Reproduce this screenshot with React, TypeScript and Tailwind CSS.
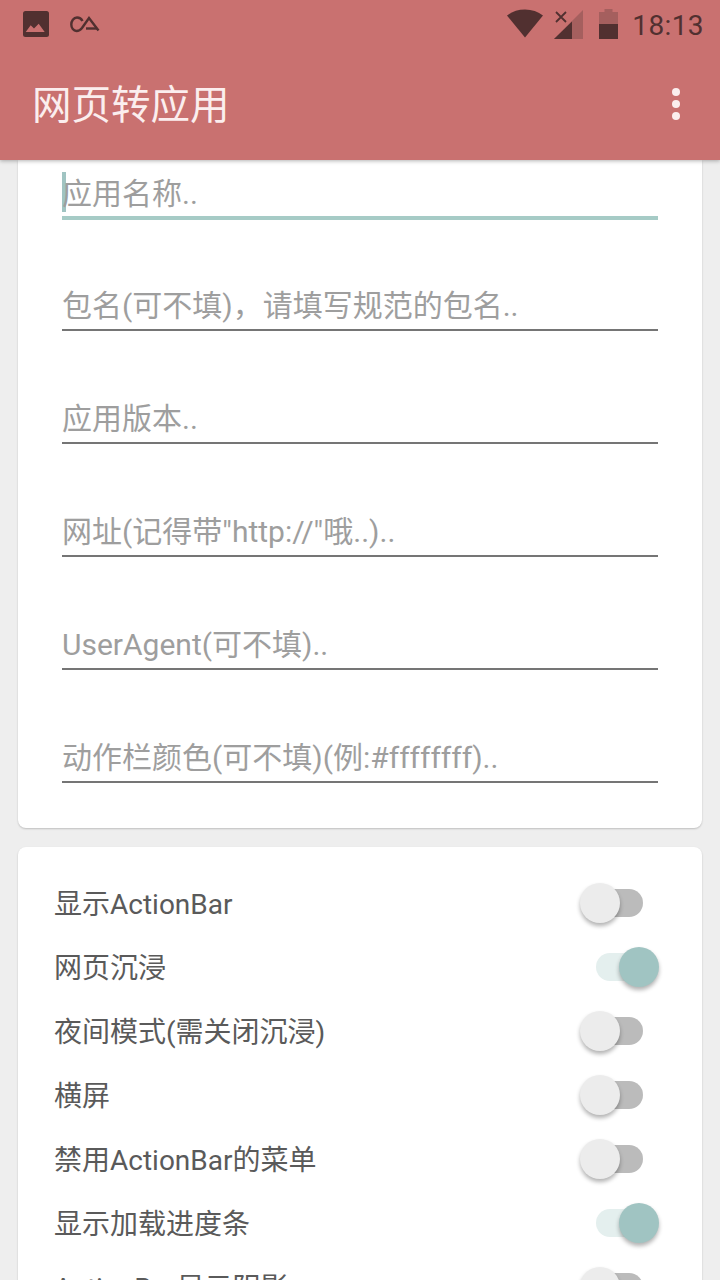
// 网页转应用 form screen
const FONT = "font-['Roboto','Noto_Sans_CJK_SC',sans-serif]";

const fields = [
  "包名(可不填)，请填写规范的包名..",
  "应用版本..",
  "网址(记得带\"http://\"哦..)..",
  "UserAgent(可不填)..",
  "动作栏颜色(可不填)(例:#ffffffff)..",
];

const toggles = [
  { label: "显示ActionBar", on: false },
  { label: "网页沉浸", on: true },
  { label: "夜间模式(需关闭沉浸)", on: false },
  { label: "横屏", on: false },
  { label: "禁用ActionBar的菜单", on: false },
  { label: "显示加载进度条", on: true },
  { label: "ActionBar显示阴影", on: false },
];

function Toggle({ on }: { on: boolean }) {
  return (
    <div className={`relative h-7 w-[47px] rounded-full ${on ? "bg-[#e4efee]" : "bg-[#bbbbbb]"}`}>
      {on ? (
        <div className="absolute -top-1.5 left-[23px] size-10 rounded-full bg-[#a0c4c2] shadow-[0_3px_4px_rgba(0,0,0,0.3)]" />
      ) : (
        <div className="absolute -top-1.5 left-[-16px] size-10 rounded-full bg-[#ececec] shadow-[0_3px_4px_rgba(0,0,0,0.3)]" />
      )}
    </div>
  );
}

function StatusIcons() {
  return (
    <div className="flex items-center">
      <svg width="36" height="30" viewBox="0 0 36 30" className="mr-[11px]">
        <path d="M0 6.500C5 2.500 11 0.500 18 0.500s13 2 18 6L18 28.500z" fill="#513030" />
      </svg>
      <svg width="30" height="30" viewBox="0 0 30 30" className="mr-[15px]">
        <path d="M29 1v29H0z" fill="#a55f5e" />
        <path d="M18 12.500V30H0z" fill="#513030" />
        <path d="M2 3l10 10M12 3L2 13" stroke="#513030" strokeWidth="1.800" fill="none" />
      </svg>
      <svg width="19" height="30" viewBox="0 0 19 30" className="mr-[14px]">
        <path d="M0 3h5.500V0h8v3H19v12H0z" fill="#a55f5e" />
        <path d="M0 15h19v15H0z" fill="#513030" />
      </svg>
      <span className="pt-[3px] text-[28px] leading-none tracking-[0.4px] text-[#513030]">18:13</span>
    </div>
  );
}

export default function App() {
  return (
    <div className={`relative flex h-[1280px] w-[720px] flex-col overflow-hidden bg-[#eeeeee] ${FONT}`}>
      <header className="relative z-10 h-40 shrink-0 bg-[#c97170] shadow-[0_1px_4px_rgba(0,0,0,0.3)]">
        <div className="flex h-12 items-center justify-between pl-[23px] pr-4">
          <div className="flex items-center gap-[21px]">
            <svg width="26" height="26" viewBox="0 0 26 26">
              <rect width="26" height="26" rx="2.500" fill="#513030" />
              <path d="M2.700 21l5-6.700 3.300 3.200 4.700-4.800 6 8.300z" fill="#c97170" />
            </svg>
            <svg width="30" height="18" viewBox="0 0 30 18" fill="none" stroke="#513030" strokeWidth="2.400">
              <path d="M28.500 15.500L19 3l-7 10c-1.500 2-3.500 3-5.500 3C3.500 16 1.300 13 1.300 9.500S3.500 2.500 7 2.500c2.500 0 4.500 1.500 5.500 3.500" />
              <path d="M16 13.500h11" />
            </svg>
          </div>
          <StatusIcons />
        </div>
        <div className="flex h-28 items-center justify-between pl-8 pr-10">
          <h1 className="pt-1 text-[39.5px] font-normal leading-none text-[#fbeeee]">网页转应用</h1>
          <div className="flex flex-col gap-1">
            <span className="size-2 rounded-full bg-[#fbeeee]" />
            <span className="size-2 rounded-full bg-[#fbeeee]" />
            <span className="size-2 rounded-full bg-[#fbeeee]" />
          </div>
        </div>
      </header>

      <main className="flex flex-col gap-[19px] px-[18px]">
        <section className="flex h-[668px] flex-col gap-[55px] rounded-b-lg bg-white px-11 shadow-[0_1px_2px_rgba(0,0,0,0.2)]">
          <div className="relative -mb-0.5 flex h-[60px] shrink-0 items-center border-b-4 border-[#a6cbc6] pt-[11px] text-[30px] text-[#9e9e9e]">
            <span className="absolute left-0 top-[12px] h-10 w-1 bg-[#a0c4c2]" />
            <span className="relative">应用名称..</span>
          </div>
          {fields.map((f) => (
            <div key={f} className="flex h-[58px] shrink-0 items-center border-b-2 border-[#757575] pt-[9px] text-[30px] text-[#9e9e9e] whitespace-nowrap">
              {f}
            </div>
          ))}
        </section>

        <section className="rounded-t-lg bg-white pl-9 pr-[59px] pt-6 shadow-[0_1px_2px_rgba(0,0,0,0.2)]">
          {toggles.map((t) => (
            <div key={t.label} className="flex h-16 items-center justify-between text-[28px] text-[#5a5a5a]">
              <span className="pt-1">{t.label}</span>
              <Toggle on={t.on} />
            </div>
          ))}
        </section>
      </main>
    </div>
  );
}
